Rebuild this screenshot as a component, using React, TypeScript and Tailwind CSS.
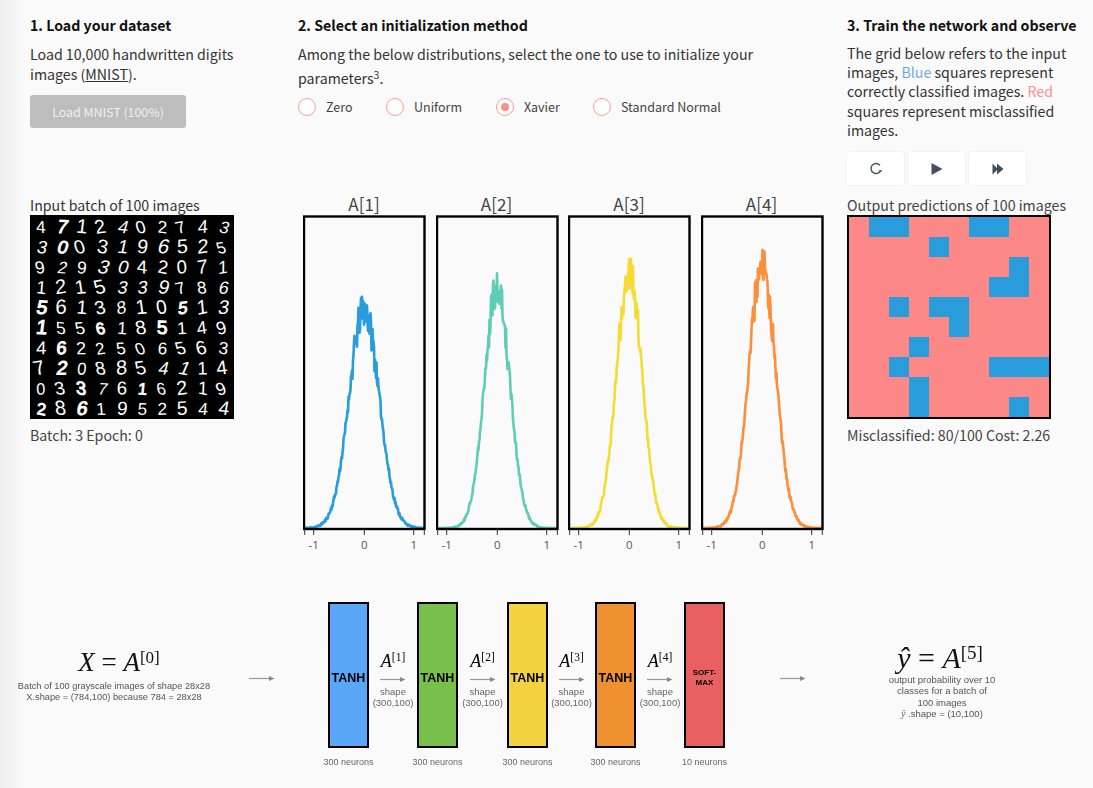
import React from 'react';

const sans = 'font-["Noto_Sans_CJK_SC","Source_Sans_Pro",sans-serif]';

const DIGITS = [
  '4712402743',
  '3003196525',
  '9293042071',
  '1215339786',
  '5613810513',
  '1556185149',
  '4622506563',
  '7208854114',
  '0337616219',
  '2861952544',
];

// thick strokes in the batch image
const HEAVY = new Set([1, 11, 47, 40, 53, 50, 56, 71, 82, 90, 92, 85, 61]);

const BLUE_CELLS = new Set([1, 2, 6, 7, 14, 28, 37, 38, 42, 44, 45, 55, 63, 72, 77, 78, 79, 83, 93, 98]);

const CHARTS = [
  { title: 'A[1]', color: '#299cdb', peak: 235, sigma: 0.3, seed: 11 },
  { title: 'A[2]', color: '#5ecdb5', peak: 259, sigma: 0.255, seed: 27 },
  { title: 'A[3]', color: '#f5dc35', peak: 275, sigma: 0.255, seed: 43 },
  { title: 'A[4]', color: '#fd8f3a', peak: 283, sigma: 0.27, seed: 59 },
];

function rng(seed: number) {
  let a = seed;
  return () => {
    a = (a + 0x6d2b79f5) | 0;
    let t = Math.imul(a ^ (a >>> 15), 1 | a);
    t = (t + Math.imul(t ^ (t >>> 7), 61 | t)) ^ t;
    return ((t ^ (t >>> 14)) >>> 0) / 4294967296;
  };
}

// noisy bell curve in chart pixels, 50px per unit, baseline at y=313
function histogram(peak: number, sigma: number, seed: number) {
  const r = rng(seed);
  const pts: string[] = [];
  for (let px = 2; px <= 121; px += 0.5) {
    const v = (px - 61.2) / 50;
    const h = peak * 0.93 * Math.exp(-(v * v) / (2 * sigma * sigma));
    const noise = (r() - 0.5) * Math.min(36, Math.sqrt(h) * (h > peak * 0.66 ? 2.4 : 1.1));
    pts.push(`${px},${(313 - Math.max(0, h + noise)).toFixed(1)}`);
  }
  return pts.join(' ');
}

function Histogram({ title, color, peak, sigma, seed }: (typeof CHARTS)[number]) {
  return (
    <div className="flex flex-col items-center w-[122px]">
      <div className={`${sans} h-[19px] text-[17px] leading-[15px] text-[#444]`}>{title}</div>
      <svg width="124" height="342" className="shrink-0 self-start">
        <polyline points={histogram(peak, sigma, seed)} fill="none" stroke={color} strokeWidth="2.6" strokeLinejoin="round" />
        <rect x="1" y="1.5" width="120.5" height="312.5" fill="none" stroke="#000" strokeWidth="2.4" />
        {[1.7, 10.7, 61.3, 110.7, 121.3].map((x) => (
          <line key={x} x1={x} x2={x} y1="314" y2="320" stroke="#333" strokeWidth="1" />
        ))}
        {[
          ['-1', 10.7],
          ['0', 61.3],
          ['1', 110.7],
        ].map(([label, x]) => (
          <text key={label} x={x} y="334" textAnchor="middle" fontSize="11.5" fill="#555" fontFamily="Open Sans, sans-serif">
            {label}
          </text>
        ))}
      </svg>
    </div>
  );
}

function DigitsImage() {
  const r = rng(5);
  return (
    <svg width="204" height="204" className="block bg-black">
      {DIGITS.map((row, y) =>
        row.split('').map((d, x) => {
          const cx = 11 + x * 20.2;
          const cy = 18 + y * 20.2;
          const rot = (r() - 0.5) * 26;
          const skew = (r() - 0.5) * 24;
          const scale = 0.82 + r() * 0.2;
          return (
            <text
              key={`${x}-${y}`}
              transform={`translate(${cx} ${cy}) rotate(${rot.toFixed(1)}) skewX(${skew.toFixed(1)}) scale(${scale.toFixed(2)})`}
              textAnchor="middle"
              fontSize="20"
              fill="#fff"
              stroke="#fff"
              strokeWidth={HEAVY.has(y * 10 + x) ? 1.1 : 0}
              fontFamily="Liberation Sans, sans-serif"
            >
              {d}
            </text>
          );
        }),
      )}
    </svg>
  );
}

function Radio({ label, checked, className }: { label: string; checked?: boolean; className: string }) {
  return (
    <div className={`flex items-center gap-[10px] ${className}`}>
      <span className="flex items-center justify-center w-[18px] h-[18px] rounded-full border border-[#fd9a94] bg-white">
        {checked && <span className="w-[8px] h-[8px] rounded-full bg-[#fd8f88]" />}
      </span>
      <span className="text-[12.5px] leading-[18px] text-[#444]">{label}</span>
    </div>
  );
}

function Arrow({ className = '' }: { className?: string }) {
  return (
    <svg width="26" height="7" className={`shrink-0 ${className}`}>
      <line x1="0" x2="21" y1="3.5" y2="3.5" stroke="#999" strokeWidth="1.2" />
      <path d="M20 1 L25.5 3.5 L20 6 Z" fill="#888" />
    </svg>
  );
}

function Layer({ color, label, soft }: { color: string; label: string; soft?: boolean }) {
  return (
    <div className="flex flex-col items-center w-[41px] shrink-0">
      <div
        className="flex items-center justify-center w-[41px] h-[146px] border-2 border-black pt-[6px] text-center font-bold text-black"
        style={{ backgroundColor: color }}
      >
        {soft ? (
          <span className="text-[8px] leading-[10px]">SOFT-<br />MAX</span>
        ) : (
          <span className="text-[12.5px]">TANH</span>
        )}
      </div>
      <div className="mt-[9px] whitespace-nowrap text-[9px] leading-[11px] text-[#666]">{label}</div>
    </div>
  );
}

function Connector({ n, className }: { n: number; className: string }) {
  return (
    <div className={`flex flex-col items-center pt-[49px] shrink-0 ${className}`}>
      <div className='h-[20px] whitespace-nowrap font-["Liberation_Serif",serif] text-[18px] leading-[20px] text-black'>
        <i>A</i>
        <sup className="text-[11.5px] leading-none">[{n}]</sup>
      </div>
      <Arrow className="mt-[5px]" />
      <div className="mt-[3px] whitespace-nowrap text-center text-[9.5px] leading-[11px] text-[#666]">
        shape
        <br />
        (300,100)
      </div>
    </div>
  );
}

function ControlButton({ children }: { children: React.ReactNode }) {
  return (
    <button className="flex items-center justify-center w-[57px] h-[33px] rounded-[3px] bg-white shadow-[0_0_2px_rgba(0,0,0,0.12)]">
      {children}
    </button>
  );
}

export default function App() {
  return (
    <main className={`relative h-[788px] w-[1093px] overflow-hidden bg-[#fafafa] ${sans}`}>
      <div className="absolute inset-y-0 left-0 w-[26px] bg-gradient-to-r from-[#eeeeee] to-transparent" />

      {/* Steps */}
      <section className="relative flex h-[196px] pl-[30px] pt-[15px]">
        <div className="w-[268px]">
          <h3 className="text-[14.2px] leading-[20px] font-bold text-[#111]">1. Load your dataset</h3>
          <p className="mt-[9px] text-[14.2px] leading-[20px] text-[#333]">
            Load 10,000 handwritten digits
            <br />
            images (<u>MNIST</u>).
          </p>
          <button className="mt-[11px] w-[156px] h-[33px] rounded-[3px] bg-[#bdbdbd] pt-[2px] text-[12.4px] text-[#eeeeee]">
            Load MNIST (100%)
          </button>
        </div>

        <div className="w-[549px]">
          <h3 className="text-[14.2px] leading-[20px] font-bold text-[#111]">2. Select an initialization method</h3>
          <p className="mt-[7px] text-[14.2px] leading-[24px] text-[#333]">
            Among the below distributions, select the one to use to initialize your
            <br />
            parameters<sup className="text-[10.5px] leading-none">3</sup>.
          </p>
          <div className="mt-[8px] flex">
            <Radio label="Zero" className="w-[88px]" />
            <Radio label="Uniform" className="w-[110px]" />
            <Radio label="Xavier" checked className="w-[97px]" />
            <Radio label="Standard Normal" className="w-[160px]" />
          </div>
        </div>

        <div className="w-[230px]">
          <h3 className="text-[14.2px] leading-[20px] font-bold text-[#111] whitespace-nowrap">3. Train the network and observe</h3>
          <p className="mt-[9px] text-[14.2px] leading-[19.2px] text-[#333] whitespace-nowrap">
            The grid below refers to the input
            <br />
            images, <span className="text-[#6fa8e8]">Blue</span> squares represent
            <br />
            correctly classified images. <span className="text-[#fd8f8f]">Red</span>
            <br />
            squares represent misclassified
            <br />
            images.
          </p>
          <div className="mt-[12px] flex gap-[4px]">
            <ControlButton>
              <svg width="14" height="14" viewBox="0 0 14 14">
                <path d="M11 3.4 A5 5 0 1 0 11.6 8.6" fill="none" stroke="#4a5666" strokeWidth="1.4" />
                <path d="M9.6 8.2 L13 8 L11.8 10.6 Z" fill="#4a5666" />
              </svg>
            </ControlButton>
            <ControlButton>
              <svg width="12" height="12" viewBox="0 0 12 12">
                <path d="M0.5 0 L11.5 6 L0.5 12 Z" fill="#434f5e" />
              </svg>
            </ControlButton>
            <ControlButton>
              <svg width="12" height="12" viewBox="0 0 12 12">
                <path d="M0.5 0.5 L6 6 L0.5 11.5 Z M5 0.5 L11.5 6 L5 11.5 Z" fill="#434f5e" />
              </svg>
            </ControlButton>
          </div>
        </div>
      </section>

      {/* Charts */}
      <section className="relative flex h-[406px] pl-[30px]">
        <div className="w-[273px]">
          <div className="h-[19px] text-[14.2px] leading-[19px] text-[#333]">Input batch of 100 images</div>
          <DigitsImage />
          <div className="mt-[6px] text-[14.2px] leading-[20px] text-[#444]">Batch: 3 Epoch: 0</div>
        </div>

        <div className="flex w-[544px] gap-[10.5px]">
          {CHARTS.map((c) => (
            <Histogram key={c.title} {...c} />
          ))}
        </div>

        <div className="w-[204px]">
          <div className="h-[19px] whitespace-nowrap text-[14.2px] leading-[19px] text-[#444]">Output predictions of 100 images</div>
          <div className="grid grid-cols-[repeat(10,20px)] border-2 border-black w-[204px]">
            {Array.from({ length: 100 }, (_, i) => (
              <div key={i} className={BLUE_CELLS.has(i) ? 'h-[20px] bg-[#299cdb]' : 'h-[20px] bg-[#fd8888]'} />
            ))}
          </div>
          <div className="mt-[6px] whitespace-nowrap text-[14.2px] leading-[20px] text-[#444]">Misclassified: 80/100 Cost: 2.26</div>
        </div>
      </section>

      {/* Network diagram */}
      <section className='relative flex font-["Liberation_Sans",sans-serif] blur-[0.3px]'>
        <div className="flex w-[228px] shrink-0 flex-col items-center pt-[46px]">
          <div className='ml-[10px] h-[28px] whitespace-nowrap font-["Liberation_Serif",serif] text-[27px] leading-[28px] text-[#111]'>
            <i>X</i> = <i>A</i>
            <sup className="text-[17px] leading-none">[0]</sup>
          </div>
          <div className="mt-[5px] text-center whitespace-nowrap text-[9.25px] leading-[11px] text-[#555]">
            Batch of 100 grayscale images of shape 28x28
            <br />
            X.shape = (784,100) because 784 = 28x28
          </div>
        </div>
        <Arrow className="ml-[21px] mt-[73px]" />
        <div className="ml-[53px] flex">
          <Layer color="#5aa7f8" label="300 neurons" />
          <Connector n={1} className="w-[48px]" />
          <Layer color="#79bf4c" label="300 neurons" />
          <Connector n={2} className="w-[49px]" />
          <Layer color="#f3d23f" label="300 neurons" />
          <Connector n={3} className="w-[47px]" />
          <Layer color="#ef9130" label="300 neurons" />
          <Connector n={4} className="w-[48px]" />
          <Layer color="#e96060" label="10 neurons" soft />
        </div>
        <Arrow className="ml-[55px] mt-[73px]" />
        <div className="ml-[66px] flex w-[140px] flex-col items-center pt-[40px]">
          <div className='mr-[4px] h-[32px] whitespace-nowrap font-["Liberation_Serif",serif] text-[30px] leading-[32px] text-[#111]'>
            <i>ŷ</i> = <i>A</i>
            <sup className="text-[19px] leading-none">[5]</sup>
          </div>
          <div className="text-center whitespace-nowrap text-[9.5px] leading-[11.3px] text-[#555]">
            output probability over 10
            <br />
            classes for a batch of
            <br />
            100 images
            <br />
            <i className='font-["Liberation_Serif",serif]'>ŷ</i> .shape = (10,100)
          </div>
        </div>
      </section>
    </main>
  );
}
